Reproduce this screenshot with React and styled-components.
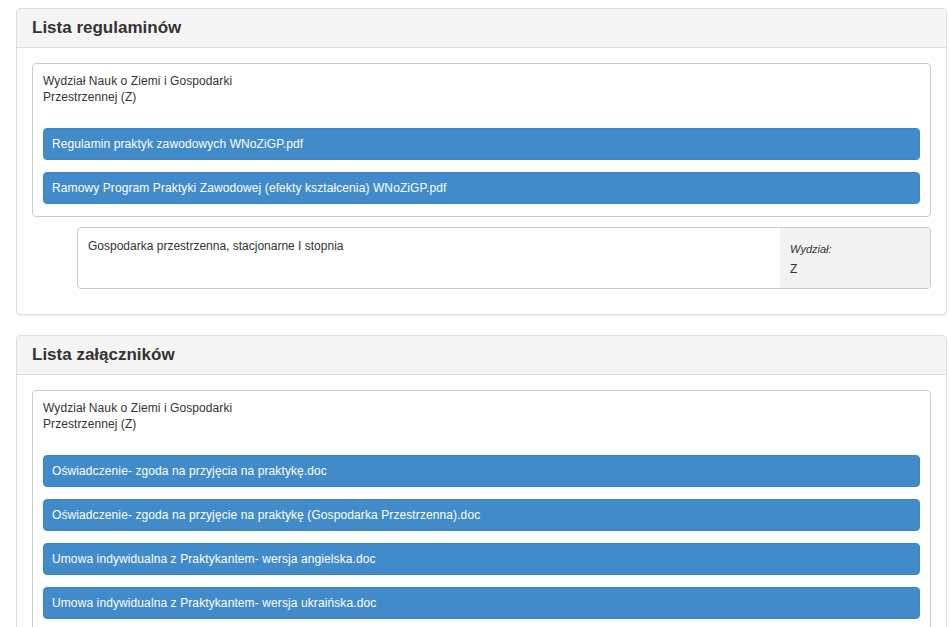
import React from "react";
import styled, { createGlobalStyle } from "styled-components";

const Global = createGlobalStyle`
  html, body { margin: 0; padding: 0; background: #fff; }
  body { font-family: "Liberation Sans", Arial, sans-serif; font-size: 12px; color: #333; }
`;

const Page = styled.div`
  padding: 8px 2px 0 16px;
`;

const Panel = styled.section`
  border: 1px solid #ddd;
  border-radius: 4px;
  margin-bottom: 20px;
  background: #fff;
  box-shadow: 0 1px 1px rgba(0,0,0,0.05);
`;

const PanelHeading = styled.h3`
  margin: 0;
  padding: 9px 15px 10px;
  background: #f5f5f5;
  border-bottom: 1px solid #ddd;
  border-radius: 3px 3px 0 0;
  font-size: 17px;
  line-height: 19px;
  font-weight: bold;
  color: #333;
`;

const PanelBody = styled.div`
  padding: 15px;
`;

const Group = styled.div`
  border: 1px solid #ccc;
  border-radius: 4px;
  padding: 9px 10px 12px;
  margin-bottom: 10px;
`;

const Faculty = styled.div`
  width: 200px;
  line-height: 16px;
  margin-bottom: 23px;
  letter-spacing: 0.08px;
`;

const Files = styled.div`
  display: flex;
  flex-direction: column;
  gap: 12px;
`;

const FileButton = styled.a`
  display: block;
  background: #428bca;
  border: 1px solid #3f85c2;
  border-radius: 4px;
  color: #fff;
  text-decoration: none;
  padding: 0 8px;
  height: 30px;
  line-height: 30px;
  font-size: 12px;
  letter-spacing: 0.1px;
`;

const Program = styled.div`
  display: flex;
  margin: 0 0 10px 45px;
  border: 1px solid #ccc;
  border-radius: 4px;
  overflow: hidden;
  height: 60px;
`;

const ProgramName = styled.div`
  flex: 1;
  padding: 11px 10px;
  line-height: 14px;
`;

const ProgramMeta = styled.div`
  width: 140px;
  background: #f2f2f2;
  padding: 14px 0 0 10px;
  line-height: 14px;
`;

const MetaLabel = styled.div`
  font-style: italic;
  font-size: 11px;
  margin-bottom: 6px;
`;

const regulaminy = [
  "Regulamin praktyk zawodowych WNoZiGP.pdf",
  "Ramowy Program Praktyki Zawodowej (efekty kształcenia) WNoZiGP.pdf",
];

const zalaczniki = [
  "Oświadczenie- zgoda na przyjęcia na praktykę.doc",
  "Oświadczenie- zgoda na przyjęcie na praktykę (Gospodarka Przestrzenna).doc",
  "Umowa indywidualna z Praktykantem- wersja angielska.doc",
  "Umowa indywidualna z Praktykantem- wersja ukraińska.doc",
];

const FileGroup = ({ files }) => (
  <Group>
    <Faculty>Wydział Nauk o Ziemi i Gospodarki Przestrzennej (Z)</Faculty>
    <Files>
      {files.map((f) => (
        <FileButton key={f} href="#">{f}</FileButton>
      ))}
    </Files>
  </Group>
);

export default function App() {
  return (
    <Page>
      <Global />
      <Panel>
        <PanelHeading>Lista regulaminów</PanelHeading>
        <PanelBody>
          <FileGroup files={regulaminy} />
          <Program>
            <ProgramName>Gospodarka przestrzenna, stacjonarne I stopnia</ProgramName>
            <ProgramMeta>
              <MetaLabel>Wydział:</MetaLabel>
              <div>Z</div>
            </ProgramMeta>
          </Program>
        </PanelBody>
      </Panel>
      <Panel>
        <PanelHeading>Lista załączników</PanelHeading>
        <PanelBody>
          <FileGroup files={zalaczniki} />
        </PanelBody>
      </Panel>
    </Page>
  );
}
